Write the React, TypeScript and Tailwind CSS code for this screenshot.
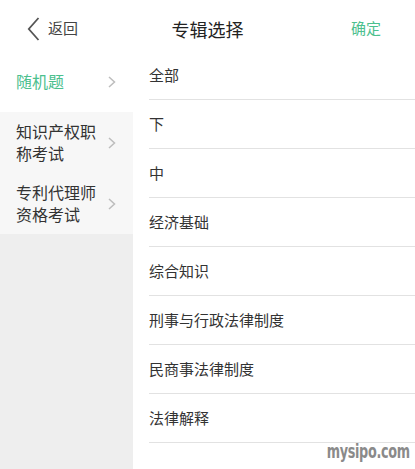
import React from "react";

const categories = [
  { label: ["随机题"], active: true },
  { label: ["知识产权职", "称考试"], active: false },
  { label: ["专利代理师", "资格考试"], active: false },
];

const albums = ["全部", "下", "中", "经济基础", "综合知识", "刑事与行政法律制度", "民商事法律制度", "法律解释"];

function Chevron({ dir, className }: { dir: "left" | "right"; className?: string }) {
  return dir === "left" ? (
    <svg width="13" height="24" viewBox="0 0 13 24" className={className}>
      <path d="M11.5 1 L1.8 12 L11.5 23" fill="none" stroke="#555" strokeWidth="1.8" />
    </svg>
  ) : (
    <svg width="8" height="12" viewBox="0 0 8 12" className={className}>
      <path d="M1 1 L6.5 6 L1 11" fill="none" stroke="#bdbdbd" strokeWidth="1.5" />
    </svg>
  );
}

export default function App() {
  return (
    <div
      className="relative flex h-[469px] w-[415px] flex-col overflow-hidden bg-white text-[#333]"
      style={{ fontFamily: '"Noto Sans CJK SC", "Noto Sans", sans-serif' }}
    >
      <header className="relative flex h-[51px] items-center px-[27px] pt-[6px]">
        <div className="flex items-center gap-[8px]">
          <Chevron dir="left" />
          <span className="text-[15px] text-[#444]">返回</span>
        </div>
        <h1 className="absolute left-0 right-0 top-[16px] text-center text-[18px] text-[#222]">专辑选择</h1>
        <span className="ml-auto mr-[7px] text-[15px] text-[#4cc08e]">确定</span>
      </header>

      <div className="flex flex-1">
        <aside className="flex w-[133px] flex-col bg-[#eeeeee]">
          {categories.map((c, i) => (
            <div
              key={i}
              className={`flex h-[61px] items-center pl-[16px] pr-[19px] ${i === 0 ? "bg-white" : "bg-[#f7f7f7]"}`}
            >
              <div
                className={`flex flex-1 flex-col gap-[1px] text-[16px] leading-[21px] ${c.active ? "text-[#4cc08e]" : "text-[#333]"}`}
              >
                {c.label.map((l) => (
                  <span key={l}>{l}</span>
                ))}
              </div>
              <Chevron dir="right" className="translate-x-[2px]" />
            </div>
          ))}
        </aside>

        <ul className="flex-1 pl-[16px]">
          {albums.map((a) => (
            <li
              key={a}
              className="flex h-[49px] items-center border-b border-[#e2e2e2] text-[15px] text-[#333]"
            >
              {a}
            </li>
          ))}
        </ul>
      </div>

      <span
        className="absolute bottom-[3px] right-[5px] inline-block origin-right scale-x-[0.64] text-[20px] font-bold tracking-[-0.5px] text-[#8a8a8a]"
        style={{ fontFamily: '"DejaVu Sans", "Liberation Sans", sans-serif' }}
      >
        mysipo.com
      </span>
    </div>
  );
}
